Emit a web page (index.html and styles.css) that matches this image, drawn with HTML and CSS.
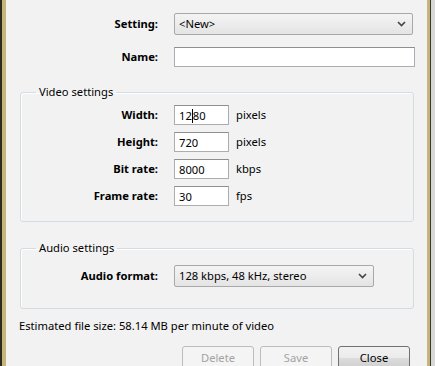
FILE: index.html
```html
<!DOCTYPE html>
<html lang="en">
<head>
    <meta charset="UTF-8">
    <meta name="viewport" content="width=device-width, initial-scale=1.0">
    <title>Video Settings</title>
    <link rel="stylesheet" href="styles.css">
</head>
<body>
    <div class="frame">
        <div class="dialog">
            <div class="row top-row">
                <label class="label">Setting:</label>
                <div class="combo combo-wide">
                    <span>&lt;New&gt;</span>
                    <svg width="9" height="6" viewBox="0 0 9 6"><path d="M1 1 L4.5 4.5 L8 1" fill="none" stroke="#444" stroke-width="1.6"/></svg>
                </div>
            </div>
            <div class="row name-row">
                <label class="label">Name:</label>
                <input class="text-field name-field" type="text" value="">
            </div>

            <fieldset class="group video-group">
                <legend>Video settings</legend>
                <div class="row field-row">
                    <label class="label">Width:</label>
                    <div class="text-field small-field">12<span class="caret"></span>80</div>
                    <span class="unit">pixels</span>
                </div>
                <div class="row field-row">
                    <label class="label">Height:</label>
                    <div class="text-field small-field">720</div>
                    <span class="unit">pixels</span>
                </div>
                <div class="row field-row">
                    <label class="label">Bit rate:</label>
                    <div class="text-field small-field">8000</div>
                    <span class="unit">kbps</span>
                </div>
                <div class="row field-row">
                    <label class="label">Frame rate:</label>
                    <div class="text-field small-field">30</div>
                    <span class="unit">fps</span>
                </div>
            </fieldset>

            <fieldset class="group audio-group">
                <legend>Audio settings</legend>
                <div class="row">
                    <label class="label">Audio format:</label>
                    <div class="combo combo-audio">
                        <span>128 kbps, 48 kHz, stereo</span>
                        <svg width="9" height="6" viewBox="0 0 9 6"><path d="M1 1 L4.5 4.5 L8 1" fill="none" stroke="#444" stroke-width="1.6"/></svg>
                    </div>
                </div>
            </fieldset>

            <p class="estimate">Estimated file size: 58.14 MB per minute of video</p>

            <div class="buttons">
                <button class="btn" disabled>Delete</button>
                <button class="btn" disabled>Save</button>
                <button class="btn">Close</button>
            </div>
        </div>
    </div>
</body>
</html>
```

FILE: styles.css
```css
body {
    margin: 0;
    padding: 0;
    background-color: #d8d8d8;
    font-family: "Noto Sans", "Open Sans", sans-serif;
    font-size: 11.2px;
    line-height: 16px;
    color: #000;
    overflow: hidden;
}

.frame {
    width: 431px;
    height: 366px;
    box-sizing: border-box;
    border-left: 2px solid #2b2a1c;
    border-right: 1px solid #3a3828;
}

.dialog {
    height: 100%;
    box-sizing: border-box;
    background-color: #f2f2f2;
    border-left: 4px solid #c5b47c;
    border-right: 3px solid #c5b47c;
}

.row {
    display: flex;
    align-items: center;
}

.label {
    width: 152px;
    margin-right: 16px;
    text-align: right;
    font-weight: bold;
    flex-shrink: 0;
}

.top-row {
    padding-top: 13px;
}

.name-row {
    margin-top: 12px;
}

.combo {
    height: 22px;
    box-sizing: border-box;
    border: 1px solid #a9a9a9;
    border-radius: 2px;
    background: linear-gradient(#f4f4f4, #e4e4e4);
    display: flex;
    align-items: center;
    justify-content: space-between;
    padding: 0 6px 0 4px;
}

.combo-wide {
    width: 239px;
}

.combo-audio {
    width: 200px;
}

.text-field {
    height: 20px;
    box-sizing: border-box;
    border: 1px solid #abadb3;
    border-top-color: #8e8f8f;
    background-color: #fff;
    font: inherit;
    margin: 0;
    padding: 0 4px;
}

.name-field {
    width: 241px;
}

.small-field {
    width: 55px;
    display: flex;
    align-items: center;
    padding-top: 1px;
}

.caret {
    display: inline-block;
    width: 1px;
    height: 14px;
    background-color: #000;
}

.unit {
    margin-left: 7px;
}

.group {
    margin: 0 13px 0 14px;
    padding: 5px 0 15px 0;
    border: 1px solid #d3dbe3;
    border-radius: 3px;
    box-shadow: inset 1px 1px 0 #fff;
}

.group legend {
    margin-left: 15px;
    padding: 0 3px;
    line-height: 16px;
}

.group .label {
    width: 137px;
}

.video-group {
    margin-top: 17px;
}

.field-row {
    margin-top: 7px;
}

.field-row:first-of-type {
    margin-top: 0;
}

.audio-group {
    margin-top: 18px;
    padding-top: 9px;
    padding-bottom: 21px;
}

.estimate {
    margin: 9px 0 0 13px;
}

.buttons {
    display: flex;
    justify-content: flex-end;
    gap: 6px;
    margin-top: 12px;
    padding-right: 17px;
}

.btn {
    width: 72px;
    height: 23px;
    font: inherit;
    color: #000;
    border: 1px solid #707070;
    border-radius: 3px;
    background: linear-gradient(#f2f2f2 0%, #ebebeb 50%, #dddddd 51%, #cfcfcf 100%);
}

.btn:disabled {
    color: #a3a3a3;
    border-color: #bcbcbc;
    background: #f4f4f4;
}
```
